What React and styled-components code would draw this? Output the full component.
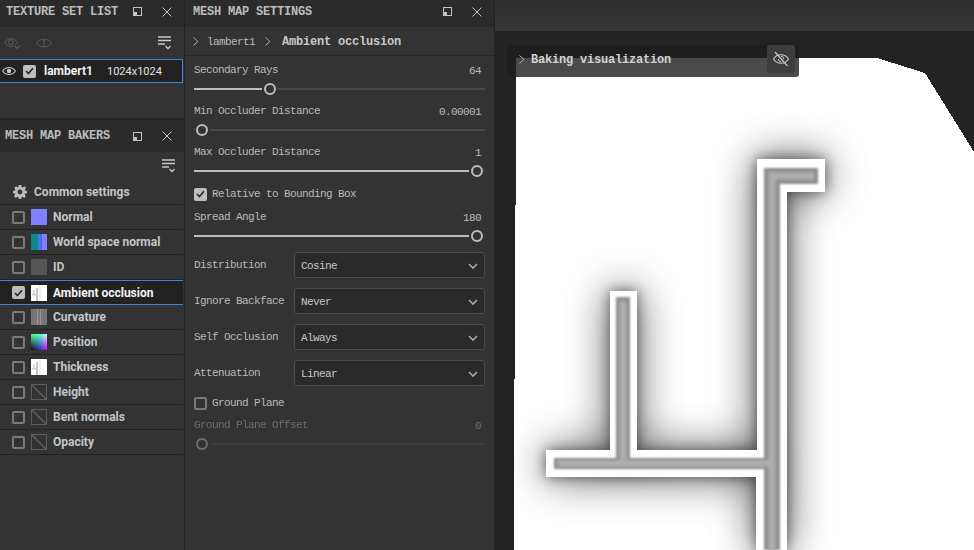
import React from "react";
import styled, { createGlobalStyle } from "styled-components";

const GlobalStyle = createGlobalStyle`
  html, body {
    margin: 0;
    padding: 0;
    background: #232323;
  }
`;

const mono = `"Liberation Mono", "DejaVu Sans Mono", monospace`;
const sans = `Roboto, "Noto Sans", sans-serif`;

const Page = styled.div`
  display: flex;
  width: 974px;
  height: 550px;
  overflow: hidden;
  background: #232323;
`;

const LeftColumn = styled.div`
  width: 184px;
  flex: none;
  display: flex;
  flex-direction: column;
  background: #333;
  border-right: 1px solid #222;
`;

const MiddleColumn = styled.div`
  width: 309px;
  flex: none;
  display: flex;
  flex-direction: column;
  background: #333;
  border-right: 1px solid #222;
`;

const Header = styled.div`
  height: ${(p) => p.$height}px;
  flex: none;
  display: flex;
  align-items: center;
  padding: 0 12px ${(p) => p.$lift}px ${(p) => p.$inset}px;
  box-sizing: border-box;
  background: #2b2b2b;
`;

const HeaderTitle = styled.div`
  flex: 1;
  font: bold 12px ${mono};
  letter-spacing: -0.2px;
  color: #bdbdbd;
  white-space: nowrap;
`;

const HeaderIcons = styled.div`
  display: flex;
  align-items: center;
  gap: 20px;
  color: #c4c4c4;
`;

const Toolbar = styled.div`
  height: ${(p) => p.$height}px;
  flex: none;
  display: flex;
  align-items: center;
  padding: 0 ${(p) => p.$right}px 0 4px;
  box-sizing: border-box;
  gap: 15px;
  color: #5c5c5c;
`;

const MenuButton = styled.div`
  margin-left: auto;
  display: flex;
  color: #c8c8c8;
`;

const TextureRow = styled.div`
  height: 24px;
  width: 183px;
  flex: none;
  display: flex;
  align-items: center;
  box-sizing: border-box;
  padding-left: 2px;
  background: #222;
  border: 1px solid #3b86d6;
  border-left: none;
  color: #c8c8c8;
`;

const TextureName = styled.span`
  font: 700 12px ${sans};
  color: #f0f0f0;
  margin-left: 8px;
  width: 63px;
`;

const TextureSize = styled.span`
  font: 400 11px ${sans};
  color: #e4e4e4;
`;

const EmptySpace = styled.div`
  height: 35px;
  flex: none;
`;

const Divider = styled.div`
  height: 2px;
  flex: none;
  background: #242424;
`;

const CommonRow = styled.div`
  height: 26px;
  width: 183px;
  flex: none;
  display: flex;
  align-items: center;
  gap: 7px;
  box-sizing: border-box;
  padding-left: 13px;
  border-bottom: 1px solid #222;
  color: #bcbcbc;
`;

const RowLabel = styled.span`
  font: 700 12px ${sans};
  color: ${(p) => (p.$active ? "#f4f4f4" : "#c2c6ca")};
  white-space: nowrap;
`;

const BakerRow = styled.div`
  height: 25px;
  width: 183px;
  flex: none;
  display: flex;
  align-items: center;
  gap: 6px;
  box-sizing: border-box;
  padding-left: 12px;
  border-bottom: 1px solid ${(p) => (p.$active ? "#3b86d6" : "#222")};
  border-top: ${(p) => (p.$active ? "1px solid #3b86d6" : "none")};
  background: ${(p) => (p.$active ? "#222" : "transparent")};
`;

const Box = styled.div`
  width: 13px;
  height: 13px;
  flex: none;
  box-sizing: border-box;
  border-radius: 2px;
  display: flex;
  align-items: center;
  justify-content: center;
  margin-left: ${(p) => p.$offset || 0}px;
  border: ${(p) => (p.$on ? "none" : "2px solid #7a7a7a")};
  background: ${(p) => (p.$on ? "#bdbdbd" : "transparent")};
`;

const MapThumb = styled.div`
  width: 16px;
  height: 16px;
  flex: none;
  display: flex;
`;

const PositionThumb = styled.div`
  width: 16px;
  height: 16px;
  flex: none;
  background: linear-gradient(to bottom, #40ff70, #000),
    linear-gradient(to right, #100020, #3030c0 60%, #e000ff);
  background-blend-mode: screen;
`;

const Breadcrumb = styled.div`
  height: 29px;
  flex: none;
  display: flex;
  align-items: center;
  padding: 1px 0 0 8px;
  box-sizing: border-box;
  border-bottom: 1px solid #272727;
  color: #a8a8a8;
`;

const Crumb = styled.span`
  font: 11px ${mono};
  letter-spacing: -0.6px;
  color: #bcbcbc;
  margin: 0 10px 0 8px;
`;

const CrumbStrong = styled.span`
  font: bold 12px ${mono};
  letter-spacing: -0.2px;
  color: #c8c8c8;
  margin-left: 11px;
`;

const SettingsBody = styled.div`
  display: flex;
  flex-direction: column;
  padding: 7px 9px 0;
`;

const SliderField = styled.div`
  display: flex;
  flex-direction: column;
  margin-bottom: ${(p) => p.$after}px;
  opacity: ${(p) => (p.$disabled ? 0.42 : 1)};
`;

const SliderHead = styled.div`
  height: 14px;
  display: flex;
  justify-content: space-between;
  align-items: center;
  padding-right: 4px;
`;

const FieldLabel = styled.span`
  font: 11px/14px ${mono};
  letter-spacing: -0.6px;
  color: #bababa;
  white-space: nowrap;
`;

const FieldValue = styled.span`
  font: 11px/14px ${mono};
  letter-spacing: -0.6px;
  color: #bababa;
  position: relative;
  top: 1px;
`;

const Track = styled.div`
  height: 12px;
  margin-top: 6px;
  display: flex;
  align-items: center;
`;

const TrackFill = styled.div`
  height: 2px;
  background: #bdbdbd;
`;

const TrackRest = styled.div`
  height: 2px;
  flex: 1;
  background: #474747;
`;

const Knob = styled.div`
  width: 16px;
  height: 12px;
  flex: none;
  display: flex;
  justify-content: center;

  &::before {
    content: "";
    width: 12px;
    height: 12px;
    box-sizing: border-box;
    border: 2px solid #bdbdbd;
    border-radius: 50%;
  }
`;

const CheckField = styled.div`
  height: 14px;
  display: flex;
  align-items: center;
  gap: 5px;
  margin-bottom: ${(p) => p.$after}px;
`;

const SelectField = styled.div`
  display: flex;
  align-items: center;
  margin-bottom: 10px;
`;

const SelectLabel = styled(FieldLabel)`
  width: 100px;
  flex: none;
`;

const SelectBox = styled.div`
  width: 191px;
  height: 26px;
  box-sizing: border-box;
  display: flex;
  align-items: center;
  justify-content: space-between;
  padding: 1px 6px 0;
  background: #2a2a2a;
  border: 1px solid #4b4b4b;
  border-radius: 3px;
  color: #aaa;
`;

const SelectValue = styled.span`
  font: 11px ${mono};
  letter-spacing: -0.6px;
  color: #c8c8c8;
`;

const Viewport = styled.div`
  flex: 1;
  display: flex;
  flex-direction: column;
  position: relative;
  min-width: 0;
`;

const ViewportBar = styled.div`
  height: 31px;
  flex: none;
  background: linear-gradient(to bottom, #2f2f2f, #363636);
`;

const Scene = styled.svg`
  flex: 1;
  display: block;
  width: 100%;
  min-height: 0;
`;

const Overlay = styled.div`
  position: absolute;
  left: 12px;
  top: 45px;
  width: 292px;
  height: 32px;
  box-sizing: border-box;
  display: flex;
  align-items: center;
  padding: 0 4px 4px 12px;
  gap: 6px;
  border-radius: 3px;
  background: rgba(29, 29, 29, 0.8);
  color: #aaa;
`;

const OverlayTitle = styled.span`
  flex: 1;
  font: bold 12px ${mono};
  letter-spacing: -0.2px;
  color: #d2d2d2;
  position: relative;
  top: 1px;
`;

const HideButton = styled.div`
  width: 28px;
  height: 28px;
  display: flex;
  align-items: center;
  justify-content: center;
  border-radius: 3px;
  background: #3d3d3d;
  color: #c8c8c8;
`;

const FloatIcon = () => (
  <svg width="9" height="9" viewBox="0 0 9 9">
    <rect x="0.5" y="0.5" width="8" height="8" fill="none" stroke="currentColor" />
    <rect x="1" y="5" width="3" height="3" fill="currentColor" />
  </svg>
);

const CloseIcon = () => (
  <svg width="10" height="10" viewBox="0 0 10 10">
    <path d="M0.5 0.5 9.5 9.5M9.5 0.5 0.5 9.5" stroke="currentColor" fill="none" />
  </svg>
);

const Chevron = ({ color = "currentColor" }) => (
  <svg width="6" height="9" viewBox="0 0 6 9">
    <path d="M0.5 0.5 5 4.5 0.5 8.5" stroke={color} fill="none" />
  </svg>
);

const ChevronDown = () => (
  <svg width="10" height="6" viewBox="0 0 10 6">
    <path d="M1 1 5 5 9 1" stroke="currentColor" strokeWidth="1.6" fill="none" />
  </svg>
);

const ListIcon = () => (
  <svg width="14" height="14" viewBox="0 0 14 14">
    <path d="M0 1H13M0 4.5H13M0 8H7" stroke="currentColor" strokeWidth="1.6" fill="none" />
    <path d="M7.5 10 10 12.5 12.5 10" stroke="currentColor" strokeWidth="1.3" fill="none" />
  </svg>
);

const EyeIcon = () => (
  <svg width="14" height="10" viewBox="0 0 14 10">
    <path d="M0.7 5C3.5 0.4 10.5 0.4 13.3 5 10.5 9.6 3.5 9.6 0.7 5Z" stroke="currentColor" strokeWidth="1.1" fill="none" />
    <circle cx="7" cy="5" r="2.2" fill="currentColor" />
  </svg>
);

const EyeCheckIcon = () => (
  <svg width="17" height="13" viewBox="0 0 17 13">
    <path d="M0.7 5.5C3.5 0.4 10.5 0.4 13.5 5.5 11.9 8.2 9.6 9.5 7 9.5 4.4 9.5 2.2 8.2 0.7 5.5Z" stroke="currentColor" fill="none" />
    <circle cx="7" cy="5.2" r="2.4" stroke="currentColor" fill="none" />
    <path d="M11 9.5 13 11.5 16 8.5" stroke="currentColor" strokeWidth="1.2" fill="none" />
  </svg>
);

const EyeOneIcon = () => (
  <svg width="16" height="12" viewBox="0 0 16 12">
    <path d="M0.6 6C3.6 0.8 12.4 0.8 15.4 6 12.4 11.2 3.6 11.2 0.6 6Z" stroke="currentColor" fill="none" />
    <path d="M6.6 4.2 8.2 3V9" stroke="currentColor" fill="none" />
  </svg>
);

const EyeOffIcon = () => (
  <svg width="18" height="18" viewBox="0 0 18 18">
    <path d="M1.5 9C5 3.4 13 3.4 16.5 9 13 14.6 5 14.6 1.5 9Z" stroke="currentColor" strokeWidth="1.1" fill="none" />
    <path d="M9 6.2A2.8 2.8 0 0 1 11.8 9M6.3 9A2.8 2.8 0 0 0 9 11.8" stroke="currentColor" fill="none" />
    <path d="M3 2 15.5 16" stroke="currentColor" strokeWidth="1.2" fill="none" />
  </svg>
);

const GearIcon = () => (
  <svg width="14" height="14" viewBox="0 0 14 14">
    <path
      fillRule="evenodd"
      fill="currentColor"
      d="M5.7 0H8.3L8.7 1.9 9.9 2.4 11.5 1.3 13 3 11.9 4.6 12.3 5.7 14 6V8.2L12.2 8.6 11.8 9.7 12.8 11.2 11.1 13 9.6 11.8 8.5 12.2 8.2 14H5.8L5.4 12.2 4.3 11.8 2.8 12.9 1 11.1 2.1 9.6 1.7 8.5 0 8.2V5.9L1.8 5.5 2.2 4.4 1.2 2.9 3 1.2 4.5 2.3 5.4 1.9ZM7 4.6A2.4 2.4 0 1 0 7 9.4 2.4 2.4 0 1 0 7 4.6Z"
    />
  </svg>
);

const CheckMark = () => (
  <svg width="9" height="8" viewBox="0 0 9 8">
    <path d="M1 4 3.4 6.5 8 1.2" stroke="#2b2b2b" strokeWidth="1.7" fill="none" />
  </svg>
);

const MiniBake = () => (
  <svg width="16" height="16" viewBox="0 0 16 16">
    <rect width="16" height="16" fill="#fff" />
    <rect x="5" y="3" width="2" height="13" fill="#c4c4c4" />
    <rect x="2" y="5" width="1.5" height="5" fill="#d2d2d2" />
    <rect x="1" y="9" width="5" height="1.5" fill="#d2d2d2" />
    <rect x="8" y="0" width="2" height="16" fill="#eee" />
  </svg>
);

const EmptyMap = () => (
  <svg width="16" height="16" viewBox="0 0 16 16">
    <rect x="0.5" y="0.5" width="15" height="15" fill="none" stroke="#5e5e5e" />
    <path d="M1 1 15 15" stroke="#5e5e5e" strokeWidth="1.5" />
  </svg>
);

const mapThumbs = {
  normal: (
    <svg width="16" height="16" viewBox="0 0 16 16">
      <rect width="16" height="16" fill="#7f7fff" />
    </svg>
  ),
  world: (
    <svg width="16" height="16" viewBox="0 0 16 16">
      <rect width="16" height="16" fill="#7f7fff" />
      <rect width="7" height="16" fill="#0a8a8a" />
      <rect x="7" width="2" height="16" fill="#3f7ee0" />
      <rect x="9" width="2" height="16" fill="#5563f0" />
    </svg>
  ),
  id: (
    <svg width="16" height="16" viewBox="0 0 16 16">
      <rect width="16" height="16" fill="#565656" />
    </svg>
  ),
  curvature: (
    <svg width="16" height="16" viewBox="0 0 16 16">
      <rect width="16" height="16" fill="#777" />
      <rect x="6" width="1" height="16" fill="#999" />
      <rect x="9" width="1" height="16" fill="#999" />
    </svg>
  ),
  bake: <MiniBake />,
  empty: <EmptyMap />,
};

const bakers = [
  { name: "Normal", map: "normal" },
  { name: "World space normal", map: "world" },
  { name: "ID", map: "id" },
  { name: "Ambient occlusion", map: "bake", active: true },
  { name: "Curvature", map: "curvature" },
  { name: "Position", map: "position" },
  { name: "Thickness", map: "bake" },
  { name: "Height", map: "empty" },
  { name: "Bent normals", map: "empty" },
  { name: "Opacity", map: "empty" },
];

const Check = ({ on, offset }) => (
  <Box $on={on} $offset={offset}>
    {on && <CheckMark />}
  </Box>
);

const PanelHeader = ({ title, inset, height = 27, lift = 4 }) => (
  <Header $inset={inset} $height={height} $lift={lift}>
    <HeaderTitle>{title}</HeaderTitle>
    <HeaderIcons>
      <FloatIcon />
      <CloseIcon />
    </HeaderIcons>
  </Header>
);

const Slider = ({ label, value, pos, after, disabled }) => (
  <SliderField $after={after} $disabled={disabled}>
    <SliderHead>
      <FieldLabel>{label}</FieldLabel>
      <FieldValue>{value}</FieldValue>
    </SliderHead>
    <Track>
      <TrackFill style={{ width: 275 * pos }} />
      <Knob />
      <TrackRest />
    </Track>
  </SliderField>
);

const Select = ({ label, value }) => (
  <SelectField>
    <SelectLabel>{label}</SelectLabel>
    <SelectBox>
      <SelectValue>{value}</SelectValue>
      <ChevronDown />
    </SelectBox>
  </SelectField>
);

const OUTER =
  "M757 159H825V192H787V550H756V477H546V450H610V291H637V450H757Z";
const INNER =
  "M764 168H818V184H780V550H764V469H554V458H616V297H630V458H764Z";

const MeshView = () => (
  <Scene viewBox="495 31 479 519" preserveAspectRatio="none">
    <defs>
      <filter id="haloNear" filterUnits="userSpaceOnUse" x="480" y="100" width="494" height="500" colorInterpolationFilters="sRGB">
        <feGaussianBlur stdDeviation="7" />
      </filter>
      <filter id="haloFar" filterUnits="userSpaceOnUse" x="480" y="60" width="494" height="540" colorInterpolationFilters="sRGB">
        <feGaussianBlur stdDeviation="22" />
      </filter>
      <filter id="soften" x="-5%" y="-5%" width="110%" height="110%">
        <feGaussianBlur stdDeviation="0.8" />
      </filter>
      <filter id="trench" x="-5%" y="-5%" width="110%" height="110%">
        <feGaussianBlur stdDeviation="1.4" />
      </filter>
    </defs>
    <rect x="495" y="31" width="479" height="519" fill="#232323" />
    <path
      d="M516 58H877L925 73 974 152V550H514V379H515V205H516Z"
      fill="#fff"
      shapeRendering="crispEdges"
    />
    <path d={OUTER} fill="#000" opacity="0.7" filter="url(#haloFar)" />
    <path d={OUTER} fill="#000" opacity="0.55" filter="url(#haloNear)" />
    <path d={OUTER} fill="#fff" />
    <path d={INNER} fill="#8f8f8f" filter="url(#soften)" />
    <path
      d="M772 172V550M772 176H814M623 301V463.5M558 463.5H772"
      fill="none"
      stroke="#aeaeae"
      strokeWidth="7"
      filter="url(#trench)"
    />
  </Scene>
);

const App = () => (
  <Page>
    <GlobalStyle />
    <LeftColumn>
      <PanelHeader title="TEXTURE SET LIST" inset={6} />
      <Toolbar $height={32} $right={12}>
        <EyeCheckIcon />
        <EyeOneIcon />
        <MenuButton>
          <ListIcon />
        </MenuButton>
      </Toolbar>
      <TextureRow>
        <EyeIcon />
        <Check on offset={7} />
        <TextureName>lambert1</TextureName>
        <TextureSize>1024x1024</TextureSize>
      </TextureRow>
      <EmptySpace />
      <Divider />
      <PanelHeader title="MESH MAP BAKERS" inset={5} height={32} lift={0} />
      <Toolbar $height={27} $right={8}>
        <MenuButton>
          <ListIcon />
        </MenuButton>
      </Toolbar>
      <CommonRow>
        <GearIcon />
        <RowLabel>Common settings</RowLabel>
      </CommonRow>
      {bakers.map((baker) => (
        <BakerRow key={baker.name} $active={baker.active}>
          <Check on={baker.active} />
          {baker.map === "position" ? (
            <PositionThumb />
          ) : (
            <MapThumb>{mapThumbs[baker.map]}</MapThumb>
          )}
          <RowLabel $active={baker.active}>{baker.name}</RowLabel>
        </BakerRow>
      ))}
    </LeftColumn>
    <MiddleColumn>
      <PanelHeader title="MESH MAP SETTINGS" inset={8} />
      <Breadcrumb>
        <Chevron />
        <Crumb>lambert1</Crumb>
        <Chevron />
        <CrumbStrong>Ambient occlusion</CrumbStrong>
      </Breadcrumb>
      <SettingsBody>
        <Slider label="Secondary Rays" value="64" pos={0.247} after={9} />
        <Slider label="Min Occluder Distance" value="0.00001" pos={0} after={9} />
        <Slider label="Max Occluder Distance" value="1" pos={1} after={10} />
        <CheckField $after={9}>
          <Check on />
          <FieldLabel>Relative to Bounding Box</FieldLabel>
        </CheckField>
        <Slider label="Spread Angle" value="180" pos={1} after={10} />
        <Select label="Distribution" value="Cosine" />
        <Select label="Ignore Backface" value="Never" />
        <Select label="Self Occlusion" value="Always" />
        <Select label="Attenuation" value="Linear" />
        <CheckField $after={8}>
          <Check />
          <FieldLabel>Ground Plane</FieldLabel>
        </CheckField>
        <Slider label="Ground Plane Offset" value="0" pos={0} after={0} disabled />
      </SettingsBody>
    </MiddleColumn>
    <Viewport>
      <ViewportBar />
      <MeshView />
      <Overlay>
        <Chevron color="#b0b0b0" />
        <OverlayTitle>Baking visualization</OverlayTitle>
        <HideButton>
          <EyeOffIcon />
        </HideButton>
      </Overlay>
    </Viewport>
  </Page>
);

export default App;
